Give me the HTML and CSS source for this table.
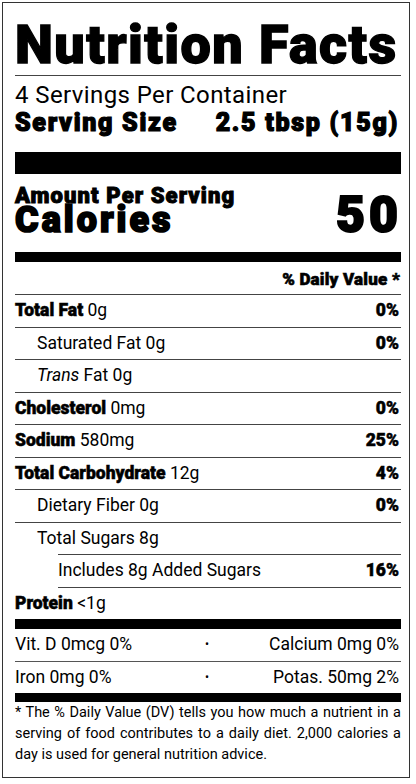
FILE: index.html
```html
<!DOCTYPE html>
<html lang="en">
<head>
    <meta charset="UTF-8">
    <meta name="viewport" content="width=device-width, initial-scale=1.0">
    <title>Nutrition Facts</title>
    <link rel="stylesheet" href="styles.css">
</head>
<body>
    <section class="label">
        <h1 class="title">Nutrition Facts</h1>
        <div class="servings">
            <div class="per-container">4 Servings Per Container</div>
            <div class="serving-size">
                <span>Serving Size</span>
                <span>2.5 tbsp (15g)</span>
            </div>
        </div>
        <div class="calories">
            <div class="calories-left">
                <div class="amount">Amount Per Serving</div>
                <div class="calories-word">Calories</div>
            </div>
            <div class="calories-value">50</div>
        </div>
        <div class="dv-head">% Daily Value *</div>
        <div class="row">
            <span><b>Total Fat</b> 0g</span><b>0%</b>
        </div>
        <div class="row indent">
            <span>Saturated Fat 0g</span><b>0%</b>
        </div>
        <div class="row indent">
            <span><i>Trans</i> Fat 0g</span>
        </div>
        <div class="row">
            <span><b>Cholesterol</b> 0mg</span><b>0%</b>
        </div>
        <div class="row">
            <span><b>Sodium</b> 580mg</span><b>25%</b>
        </div>
        <div class="row">
            <span><b>Total Carbohydrate</b> 12g</span><b>4%</b>
        </div>
        <div class="row indent">
            <span>Dietary Fiber 0g</span><b>0%</b>
        </div>
        <div class="row indent no-line">
            <span>Total Sugars 8g</span>
        </div>
        <div class="row added">
            <span>Includes 8g Added Sugars</span><b>16%</b>
        </div>
        <div class="row protein">
            <span><b>Protein</b> &lt;1g</span>
        </div>
        <div class="vitamins">
            <span>Vit. D 0mcg 0%</span><span class="dot">•</span><span class="right">Calcium 0mg 0%</span>
        </div>
        <div class="vitamins last">
            <span>Iron 0mg 0%</span><span class="dot">•</span><span class="right">Potas. 50mg 2%</span>
        </div>
        <p class="footnote">* The % Daily Value (DV) tells you how much a nutrient in a serving of food contributes to a daily diet. 2,000 calories a day is used for general nutrition advice.</p>
    </section>
</body>
</html>
```

FILE: styles.css
```css
body {
    margin: 0;
    font-family: Roboto, "Liberation Sans", sans-serif;
    color: #000;
    background: #fff;
}
.label {
    margin: 2px 0 0 2px;
    width: 386px;
    padding: 0 8px 12px 12px;
    border: 1px solid #333;
}
.title {
    margin: 0;
    padding-top: 11px;
    font-size: 54px;
    font-weight: 900;
    line-height: 61px;
    letter-spacing: 1.4px;
    -webkit-text-stroke: 1.3px #000;
    border-bottom: 1px solid #444;
}
.servings {
    padding: 5px 0 15px;
    font-size: 24px;
    line-height: 28px;
    border-bottom: 22px solid #000;
}
.per-container {
    letter-spacing: 0.4px;
}
.serving-size {
    display: flex;
    justify-content: space-between;
    padding-right: 2px;
    font-size: 25px;
    font-weight: 900;
    letter-spacing: 1.7px;
    -webkit-text-stroke: 1.2px #000;
}
.calories {
    display: flex;
    justify-content: space-between;
    align-items: last baseline;
    padding: 11px 0 19px;
    border-bottom: 10px solid #000;
    font-weight: 900;
}
.amount {
    font-size: 22px;
    line-height: 22px;
    letter-spacing: 1.1px;
    -webkit-text-stroke: 1px #000;
}
.calories-word {
    font-size: 36px;
    line-height: 26px;
    letter-spacing: 3px;
    -webkit-text-stroke: 1.7px #000;
}
.calories-value {
    font-size: 50px;
    line-height: 26px;
    letter-spacing: 4px;
    margin-right: -1px;
    -webkit-text-stroke: 2px #000;
}
.dv-head {
    padding: 2px 1px 0 0;
    font-size: 17px;
    line-height: 30px;
    font-weight: 900;
    letter-spacing: 0.2px;
    -webkit-text-stroke: 0.6px #000;
    text-align: right;
    border-bottom: 1px solid #444;
}
.row {
    display: flex;
    justify-content: space-between;
    padding-right: 2px;
    font-size: 17.5px;
    line-height: 31.5px;
    border-bottom: 1px solid #444;
}
.row b {
    font-weight: 900;
    -webkit-text-stroke: 0.5px #000;
}
.indent {
    padding-left: 22px;
}
.added {
    margin-left: 43px;
    border-top: 1px solid #444;
}
.no-line {
    border-bottom: none;
}
.protein {
    border-bottom: 10px solid #000;
}
.vitamins {
    display: grid;
    grid-template-columns: 1fr auto 1fr;
    padding-right: 2px;
    font-size: 17.5px;
    line-height: 31.5px;
    border-bottom: 1px solid #555;
}
.vitamins .right {
    text-align: right;
}
.vitamins .dot {
    font-size: 12px;
}
.vitamins.last {
    border-bottom: 9px solid #000;
}
.footnote {
    margin: 0;
    font-size: 14.5px;
    line-height: 21px;
    text-align: justify;
}
```
